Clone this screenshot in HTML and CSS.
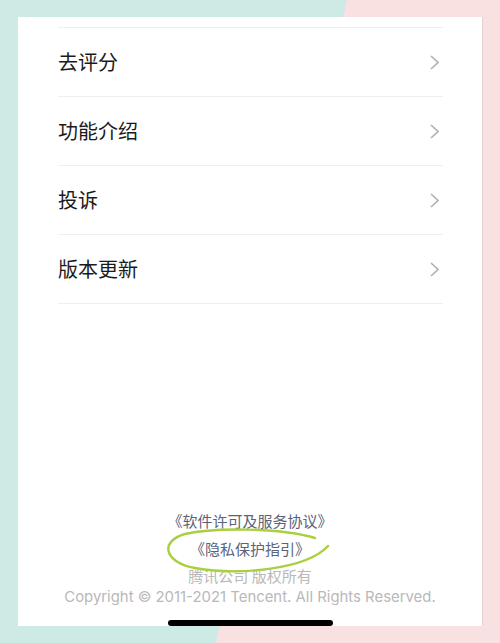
FILE: index.html
```html
<!DOCTYPE html>
<html lang="zh-CN">
<head>
<meta charset="utf-8">
<title>关于</title>
<link rel="stylesheet" href="styles.css">
</head>
<body>
<div class="card">
  <ul class="menu">
    <li class="row"><span class="label">去评分</span><svg class="chev" width="9" height="15" viewBox="0 0 9 15"><polyline points="1,1 8,7.5 1,14" fill="none" stroke="#b2b2b2" stroke-width="1.7"/></svg></li>
    <li class="row"><span class="label">功能介绍</span><svg class="chev" width="9" height="15" viewBox="0 0 9 15"><polyline points="1,1 8,7.5 1,14" fill="none" stroke="#b2b2b2" stroke-width="1.7"/></svg></li>
    <li class="row"><span class="label">投诉</span><svg class="chev" width="9" height="15" viewBox="0 0 9 15"><polyline points="1,1 8,7.5 1,14" fill="none" stroke="#b2b2b2" stroke-width="1.7"/></svg></li>
    <li class="row"><span class="label">版本更新</span><svg class="chev" width="9" height="15" viewBox="0 0 9 15"><polyline points="1,1 8,7.5 1,14" fill="none" stroke="#b2b2b2" stroke-width="1.7"/></svg></li>
  </ul>
  <div class="spacer"></div>
  <footer class="footer">
    <div class="link">《软件许可及服务协议》</div>
    <div class="link">《隐私保护指引》</div>
    <div class="company">腾讯公司 版权所有</div>
    <div class="copyright">Copyright © 2011-2021 Tencent. All Rights Reserved.</div>
  </footer>
  <svg class="scribble" width="464" height="609" viewBox="0 0 464 609">
    <path d="M297 521 C 262 511, 197 510, 167 517 C 142 524, 145 545, 177 551 C 222 559, 289 552, 310 529" fill="none" stroke="#a9d03f" stroke-width="2.4" stroke-linecap="round"/>
  </svg>
  <div class="home-bar"></div>
</div>
</body>
</html>
```

FILE: styles.css
```css
* { box-sizing: border-box; }
html, body { margin: 0; padding: 0; }
body {
  width: 500px;
  height: 643px;
  overflow: hidden;
  padding: 17px 18px 17px 18px;
  background: linear-gradient(101.5deg, #cdebe4 55%, #f9e0e1 55%);
  font-family: "Noto Sans CJK SC", "Noto Sans", sans-serif;
}
.card {
  position: relative;
  height: 609px;
  width: 464px;
  background: #ffffff;
  box-shadow: 1px 0 0 rgba(0,0,0,0.07);
  display: flex;
  flex-direction: column;
}
.menu {
  list-style: none;
  margin: 10px 39px 0 40px;
  padding: 0;
  border-top: 1px solid #efefef;
}
.row {
  height: 69px;
  border-bottom: 1px solid #efefef;
  display: flex;
  align-items: center;
  justify-content: space-between;
  padding-right: 4px;
}
.label {
  font-size: 20px;
  color: #1b1b1b;
  line-height: 1;
}
.chev { display: block; }
.spacer { flex: 1; }
.footer {
  display: flex;
  flex-direction: column;
  align-items: center;
  padding-bottom: 21px;
}
.link {
  font-size: 15px;
  line-height: 28px;
  color: #5a6379;
}
.company {
  font-size: 15px;
  line-height: 26px;
  color: #b9b9b9;
}
.copyright {
  font-family: Inter, "Liberation Sans", sans-serif;
  font-size: 14.9px;
  line-height: 16px;
  color: #b9b9b9;
}
.scribble {
  position: absolute;
  left: 0;
  top: 0;
  pointer-events: none;
}
.home-bar {
  position: absolute;
  left: 150px;
  bottom: 0;
  width: 165px;
  height: 6px;
  border-radius: 3px;
  background: #000000;
}
```
